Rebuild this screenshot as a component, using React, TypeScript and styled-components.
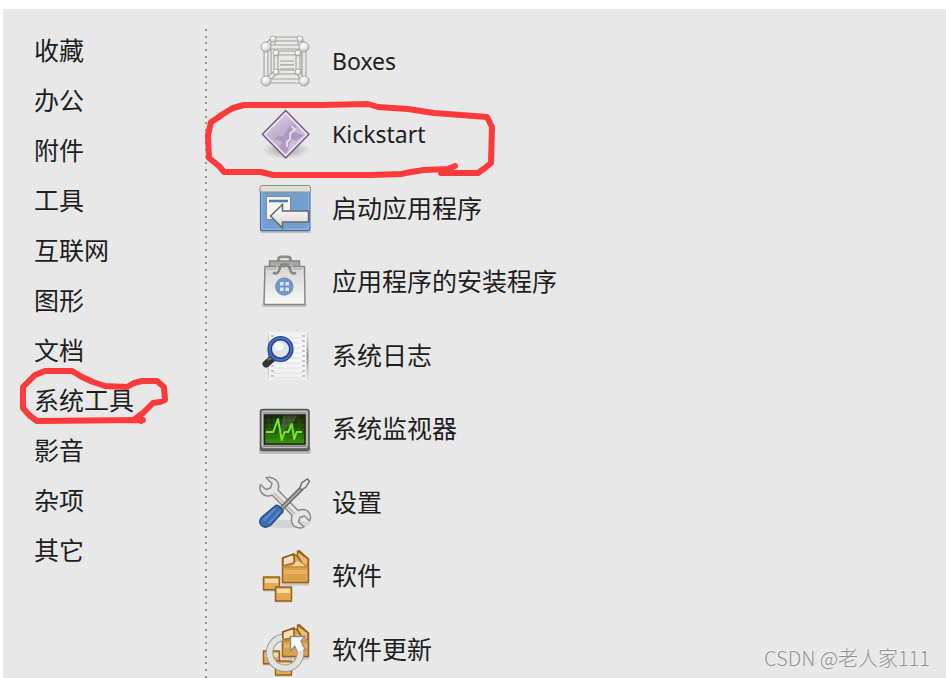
import React from "react";
import styled, { createGlobalStyle } from "styled-components";

const GlobalStyle = createGlobalStyle`
  *, *::before, *::after { box-sizing: border-box; }
  html, body { margin: 0; background: #fff; }
  body, button { font-family: "Noto Sans", "Noto Sans CJK SC", sans-serif; }
`;

const Page = styled.main`
  display: flex;
  height: 100vh;
  padding: 9px 0 0 3px;
  overflow: hidden;
`;

const Menu = styled.div`
  position: relative;
  flex: 1;
  display: grid;
  grid-template-columns: 202px 2px 1fr;
  background: #e8e8e8;
  overflow: hidden;
`;

const CategoryList = styled.ul`
  margin: 0;
  padding: 17px 0 0 31px;
  list-style: none;
`;

const CategoryItem = styled.li`
  position: relative;
  height: 50px;
`;

const Divider = styled.div`
  margin-top: 20px;
  background: repeating-linear-gradient(
    to bottom,
    #969696 0 2px, transparent 2px 7px,
    #969696 7px 9px, transparent 9px 13px,
    #969696 13px 15px, transparent 15px 20px
  );
`;

const AppList = styled.ul`
  margin: 0;
  padding: 16px 0 0 51px;
  list-style: none;
`;

const AppItem = styled.li`
  position: relative;
  height: 73px;
  &:nth-child(even) { height: 74px; }
`;

const MenuButton = styled.button`
  display: flex;
  align-items: center;
  gap: 20px;
  height: 100%;
  padding: 0;
  border: 0;
  background: none;
  color: #1e1e1e;
  white-space: nowrap;
  cursor: pointer;
`;

const Label = styled.span<{ $latin?: boolean }>`
  padding-bottom: ${(p) => (p.$latin ? 2 : 4)}px;
  font-family: ${(p) => (p.$latin ? '"Noto Sans", sans-serif' : '"Noto Sans CJK SC", sans-serif')};
  font-size: ${(p) => (p.$latin ? 23 : 25)}px;
  line-height: 36px;
`;

const Icon = styled.svg`
  display: block;
  width: 54px;
  height: 54px;
  flex: none;
  overflow: visible;
`;

const Marker = styled.svg<{ $left: number; $top: number }>`
  position: absolute;
  z-index: 1;
  left: ${(p) => p.$left}px;
  top: ${(p) => p.$top}px;
  overflow: visible;
  pointer-events: none;
  fill: none;
  stroke: #ff3a3a;
  stroke-width: 6;
  stroke-linecap: round;
  stroke-linejoin: round;
`;

const Credit = styled.span`
  position: absolute;
  right: 16px;
  bottom: 6px;
  color: #929292;
  font-family: "Noto Sans CJK SC", sans-serif;
  font-weight: 300;
  font-size: 20px;
  line-height: 28px;
  text-shadow: -1px -1px 0 #f4f4f4;
`;

function BoxesIcon() {
  const bars: [number, number, number, number][] = [
    [15, 4, 42, 4], [15, 4, 8, 12], [42, 4, 46, 12],
    [15, 4, 15, 40], [42, 4, 42, 40],
    [18, 37, 8, 46], [40, 37, 46, 46], [18, 18, 40, 18],
    [18, 18, 18, 37], [40, 18, 40, 37], [18, 37, 40, 37],
    [22, 28, 36, 28], [22, 32, 36, 32],
    [8, 12, 46, 12], [8, 46, 46, 46], [8, 12, 8, 46], [46, 12, 46, 46],
  ];
  const balls: [number, number, number][] = [
    [15, 4, 3], [42, 4, 3], [18, 18, 3], [40, 18, 3], [18, 37, 3], [40, 37, 3],
    [8, 12, 5], [46, 12, 5], [8, 46, 5], [46, 46, 5],
  ];
  return (
    <Icon viewBox="0 0 54 54" aria-hidden="true">
      <defs>
        <radialGradient id="ball" cx=".4" cy=".3" r=".7">
          <stop offset="0" stopColor="#fff" />
          <stop offset=".6" stopColor="#e4e5e1" />
          <stop offset="1" stopColor="#aeb0aa" />
        </radialGradient>
      </defs>
      {bars.map(([x1, y1, x2, y2], i) => (
        <g key={i}>
          <line x1={x1} y1={y1} x2={x2} y2={y2} stroke="#a3a59f" strokeWidth="5" />
          <line x1={x1} y1={y1} x2={x2} y2={y2} stroke="#e9eae7" strokeWidth="2.800" />
        </g>
      ))}
      {balls.map(([cx, cy, r], i) => (
        <circle key={i} cx={cx} cy={cy} r={r} fill="url(#ball)" stroke="#a3a59f" strokeWidth=".9" />
      ))}
    </Icon>
  );
}

function KickstartIcon() {
  return (
    <Icon viewBox="0 0 54 54" aria-hidden="true">
      <defs>
        <linearGradient id="gem" x1="0" y1="0" x2=".7" y2="1">
          <stop offset="0" stopColor="#e5dcea" />
          <stop offset=".5" stopColor="#c0b0cc" />
          <stop offset="1" stopColor="#d7cce6" />
        </linearGradient>
        <radialGradient id="gemShade">
          <stop offset="0" stopColor="#555" stopOpacity=".5" />
          <stop offset="1" stopColor="#555" stopOpacity="0" />
        </radialGradient>
      </defs>
      <ellipse cx="28" cy="42" rx="24" ry="9" fill="url(#gemShade)" />
      <path d="M27.7 2.5 51 26.3 27.7 50 4.3 26.3Z" fill="url(#gem)" stroke="#765b82" strokeWidth="1.4" />
      <path d="M27.7 5 48.5 26.3 27.7 47.5 6.8 26.3Z" fill="none" stroke="#f2edf5" strokeWidth="1.2" />
      <path d="M16 31 21 28 25 28 29 22 32 17 37 17 38 20 35 24 46 27 38 33 34 31 31 37 30 44 27 46 20 38 25 35 22 33Z" fill="#a68fb8" opacity=".75" />
      <path d="M33 18 37 21 32 26 32 31 29 34 29 39" fill="none" stroke="#f1ebf5" strokeWidth="2" opacity=".8" />
    </Icon>
  );
}

function StartupIcon() {
  return (
    <Icon viewBox="0 0 54 54" aria-hidden="true">
      <defs>
        <linearGradient id="arrow" x1="0" y1="0" x2="0" y2="1">
          <stop offset="0" stopColor="#fff" />
          <stop offset="1" stopColor="#d5d6d2" />
        </linearGradient>
      </defs>
      <rect x="2" y="46" width="51" height="5" rx="2" fill="#777" opacity=".35" />
      <rect x="2.6" y="4" width="49.2" height="44.5" rx="2" fill="#729fcf" stroke="#416da3" strokeWidth="1.4" />
      <path d="M2 10V5.5Q2 3.5 4 3.5H50.5Q52.5 3.5 52.5 5.5V10Z" fill="#dcdfd3" stroke="#8d9487" />
      <path d="M3.8 10.5V47.2H50.8V10.5" fill="none" stroke="#9dbfe5" />
      <path d="M8.5 14.5H32.5V37.5H8.5Z" fill="#f4f4f3" stroke="#858a86" />
      <path d="M11 19H30" stroke="#5079ae" strokeWidth="2.5" />
      <path d="M12.5 34 24.5 22.5V29H50.5V40H24.5V46Z" fill="url(#arrow)" stroke="#666a66" strokeWidth="1.5" />
    </Icon>
  );
}

function InstallerIcon() {
  return (
    <Icon viewBox="0 0 54 54" aria-hidden="true">
      <defs>
        <linearGradient id="bag" x1="0" y1="0" x2="0" y2="1">
          <stop offset="0" stopColor="#d5d6d2" />
          <stop offset="1" stopColor="#f8f8f7" />
        </linearGradient>
      </defs>
      <rect x="4" y="48" width="45" height="4" rx="2" fill="#666" opacity=".3" />
      <path d="M20.5 9V4Q21 1.8 23.5 1.8H29.5Q32 1.8 32.5 4V9" fill="none" stroke="#8b8d88" strokeWidth="2.8" />
      <path d="M11.5 6H41.5V12H11.5Z" fill="#a6a8a3" stroke="#858782" strokeWidth="1.4" />
      <path d="M7 11.5H46.500L47 48.500Q47 49.500 46 49.500H7Q6 49.500 6 48.500Z" fill="url(#bag)" stroke="#858782" strokeWidth="1.500" />
      <path d="M9 14H17L20 10H33L36 14H44" fill="none" stroke="#b7b9b4" strokeWidth="1.500" />
      <path d="M16 18Q20 20 21.500 14Q22 10 25 9.500H28Q31 10 32 14Q33.500 20 37 18" fill="none" stroke="#858782" strokeWidth="2.600" strokeLinecap="round" />
      <circle cx="26.300" cy="31.500" r="9.200" fill="#7198cb" />
      <g fill="#dce5f1">
        <rect x="22" y="27" width="3.600" height="3.600" rx=".5" />
        <rect x="27.400" y="27" width="3.600" height="3.600" rx=".5" />
        <rect x="22" y="32.400" width="3.600" height="3.600" rx=".5" />
        <rect x="27.400" y="32.400" width="3.600" height="3.600" rx=".5" />
      </g>
    </Icon>
  );
}

function LogIcon() {
  return (
    <Icon viewBox="0 0 54 54" aria-hidden="true">
      <defs>
        <linearGradient id="paper" x1="0" y1="0" x2="0" y2="1">
          <stop offset="0" stopColor="#efefef" />
          <stop offset=".3" stopColor="#fafafa" />
          <stop offset="1" stopColor="#f0f0f0" />
        </linearGradient>
        <linearGradient id="edge" x1="0" y1="0" x2="0" y2="1">
          <stop offset="0" stopColor="#aaa" stopOpacity=".1" />
          <stop offset=".5" stopColor="#888" />
          <stop offset="1" stopColor="#aaa" stopOpacity=".1" />
        </linearGradient>
      </defs>
      <rect x="11" y="3" width="38" height="48" fill="url(#paper)" />
      <rect x="10" y="3" width="1" height="48" fill="url(#edge)" />
      <rect x="48.500" y="3" width="2" height="48" fill="url(#edge)" />
      {[7, 12, 17, 22, 27, 32, 37, 42, 47].map((y) => (
        <g key={y}>
          <path d={`M16 ${y + 2}H43`} stroke="#e0e0e0" />
          <path d={`M44 ${y}H47M13 ${y}H16`} stroke="#b6b6b6" strokeWidth="1.300" />
        </g>
      ))}
      <path d="M14.500 29.500 8 35" stroke="#343432" strokeWidth="7" strokeLinecap="round" />
      <path d="M15 28 10 31" stroke="#85857f" strokeWidth="1.500" />
      <circle cx="22.500" cy="20" r="9" fill="#e2e3e3" />
      <circle cx="21" cy="17" r="4.500" fill="#fafafa" />
      <circle cx="22.500" cy="20" r="10.800" fill="none" stroke="#22418f" strokeWidth="4.600" />
      <circle cx="22.500" cy="20" r="11" fill="none" stroke="#4a70c5" strokeWidth="1.800" />
    </Icon>
  );
}

function MonitorIcon() {
  return (
    <Icon viewBox="0 0 54 54" aria-hidden="true">
      <defs>
        <linearGradient id="screen" x1="0" y1="0" x2="0" y2="1">
          <stop offset="0" stopColor="#142008" />
          <stop offset=".5" stopColor="#22510a" />
          <stop offset="1" stopColor="#36960c" />
        </linearGradient>
        <linearGradient id="bezel" x1="0" y1="0" x2="0" y2="1">
          <stop offset="0" stopColor="#9b9d99" />
          <stop offset=".85" stopColor="#a5a7a3" />
          <stop offset="1" stopColor="#50524e" />
        </linearGradient>
      </defs>
      <rect x="1" y="45" width="52" height="7" rx="3" fill="#666" opacity=".35" />
      <rect x="2.500" y="7.500" width="48.500" height="41" rx="2.500" fill="url(#bezel)" stroke="#565854" strokeWidth="1.600" />
      <rect x="4.500" y="9.500" width="44.500" height="36" rx="1" fill="none" stroke="#c4c5c2" />
      <rect x="6.500" y="13" width="40.500" height="29" fill="url(#screen)" stroke="#1b2517" strokeWidth="1.500" />
      <path d="M11 14V41M16 14V41M21 14V41M26 14V41M31 14V41M36 14V41M41 14V41M7 18H46M7 23H46M7 28H46M7 33H46M7 38H46" stroke="#52a827" strokeWidth=".6" opacity=".4" />
      <path d="M25 13.500H40L32 24 22 31Z" fill="#fff" opacity=".14" />
      <path d="M8 30H15.300L20 17 23.700 38 26.500 30H30.300L33.700 22 36.300 37 38.700 30H44" fill="none" stroke="#75e72f" strokeWidth="2" strokeLinejoin="round" />
    </Icon>
  );
}

function SettingsIcon() {
  return (
    <Icon viewBox="0 0 54 54" aria-hidden="true">
      <ellipse cx="27" cy="48" rx="25" ry="4" fill="#888" opacity=".2" />
      <path
        d="M8 1.800 14 7.500 12.500 12 8 13.500 2.500 8.500C.5 14 4 19.500 9.500 20Q13 20 14 19L34 39Q32 49 38 51Q43 53 46 51L40.500 46 42 41.500 46.500 40 51.500 45C54.500 39 50 33 44 33.500L40 34.500 20 14Q22 8 18 4Q13 0 8 1.800Z"
        fill="#e6e7e4" stroke="#888a85" strokeWidth="1.500" strokeLinejoin="round"
      />
      <path d="M16 17 37 38" stroke="#c0c1bf" strokeWidth="2" />
      <path d="M24 32 44 12" stroke="#666864" strokeWidth="4.600" />
      <path d="M24 32 44 12" stroke="#a7a9a5" strokeWidth="2" />
      <path d="M42 12 43.500 7 49.500 3 51.500 5 48 11 43.500 14Z" fill="#e7e7e5" stroke="#6d6f6a" strokeWidth="1.400" />
      <path d="M17 30Q19 28 21.500 30.500L25 34Q26 36.500 22.500 38.500L13 49Q7 53.500 3 49Q-.5 45 5 40Z" fill="#3c6db1" stroke="#244b83" strokeWidth="1.200" />
      <path d="M17 33 6 44M21 36 11 47" stroke="#5c8dd0" strokeWidth="1.800" strokeLinecap="round" />
    </Icon>
  );
}

function Packages() {
  return (
    <g stroke="#986019" strokeWidth="1.500" strokeLinejoin="round">
      <path d="M5 40H22M17 51H34M24 34H51" stroke="#777" strokeWidth="5" opacity=".3" />
      <path d="M5.500 28H21.500V40.800H5.500Z" fill="#e3aa54" />
      <path d="M7 32H20" stroke="#f6dba6" strokeWidth="4" />
      <path d="M24.500 9 36 5 39 7 41 1.500 50.500 10V33.500H24.500Z" fill="#dda249" />
      <path d="M25 9 36 5V14L25 17Z" fill="#f5dfb8" />
      <path d="M39.500 7V2L50 10V17H46Z" fill="#e9bd77" />
      <path d="M36 15 25 18H50L40 11" fill="#f1d196" stroke="#c48b3c" />
      <path d="M26 23H49" stroke="#e6b263" strokeWidth="4" />
      <path d="M17.500 38H33.500V52H17.500Z" fill="#e3aa54" />
      <path d="M19 42H32" stroke="#f6dba6" strokeWidth="4" />
    </g>
  );
}

function SoftwareIcon() {
  return <Icon viewBox="0 0 54 54" aria-hidden="true"><Packages /></Icon>;
}

function UpdateIcon() {
  return (
    <Icon viewBox="0 0 54 54" aria-hidden="true">
      <Packages />
      <path d="M24 14.500A15.500 15.500 0 1 0 41 23" fill="none" stroke="#989b95" strokeWidth="7.600" />
      <path d="M32.500 13.500H47L43 18 47.500 27 39.500 28 37 23 32.500 28Z" fill="#fbfbfa" stroke="#8a8d87" strokeWidth="1.400" />
      <path d="M24 14.500A15.500 15.500 0 1 0 41 23" fill="none" stroke="#e1e3df" strokeWidth="5.600" />
      <path d="M38 19 42.500 28" stroke="#fbfbfa" strokeWidth="5" />
    </Icon>
  );
}

const categories = ["收藏", "办公", "附件", "工具", "互联网", "图形", "文档", "系统工具", "影音", "杂项", "其它"];

const apps: { name: string; icon: React.FC; latin?: boolean }[] = [
  { name: "Boxes", icon: BoxesIcon, latin: true },
  { name: "Kickstart", icon: KickstartIcon, latin: true },
  { name: "启动应用程序", icon: StartupIcon },
  { name: "应用程序的安装程序", icon: InstallerIcon },
  { name: "系统日志", icon: LogIcon },
  { name: "系统监视器", icon: MonitorIcon },
  { name: "设置", icon: SettingsIcon },
  { name: "软件", icon: SoftwareIcon },
  { name: "软件更新", icon: UpdateIcon },
];

export default function App() {
  return (
    <>
      <GlobalStyle />
      <Page>
        <Menu>
          <CategoryList>
            {categories.map((name) => (
              <CategoryItem key={name}>
                <MenuButton type="button">
                  <Label>{name}</Label>
                </MenuButton>
                {name === "系统工具" && (
                  <Marker $left={-14} $top={-8} width="150" height="60" viewBox="20 368 150 60" aria-hidden="true">
                    <path d="M143 420 37 421 29 415 23 408 23 387 28 382 35 375 45 371 72 371 82 377 93 382 105 386 127 387 134 383 142 381 157 381 164 387 165 400 160 402 153 403 143 413 135 419 141 421" />
                  </Marker>
                )}
              </CategoryItem>
            ))}
          </CategoryList>
          <Divider />
          <AppList>
            {apps.map(({ name, icon: AppIcon, latin }) => (
              <AppItem key={name}>
                <MenuButton type="button">
                  <AppIcon />
                  <Label $latin={latin}>{name}</Label>
                </MenuButton>
                {name === "Kickstart" && (
                  <Marker $left={-57} $top={2} width="300" height="80" viewBox="200 100 300 80" aria-hidden="true">
                    <path d="M454 166 447 169 423 170 410 172 400 174 370 175 272 175 260 172 223 172 218 166 208 158 207 135 210 122 215 119 222 114 232 108 243 105 320 105 367 104 377 107 407 109 433 113 460 115 486 117 491 127 490 163 484 168 477 173 440 173" />
                  </Marker>
                )}
              </AppItem>
            ))}
          </AppList>
          <Credit>CSDN @老人家111</Credit>
        </Menu>
      </Page>
    </>
  );
}
